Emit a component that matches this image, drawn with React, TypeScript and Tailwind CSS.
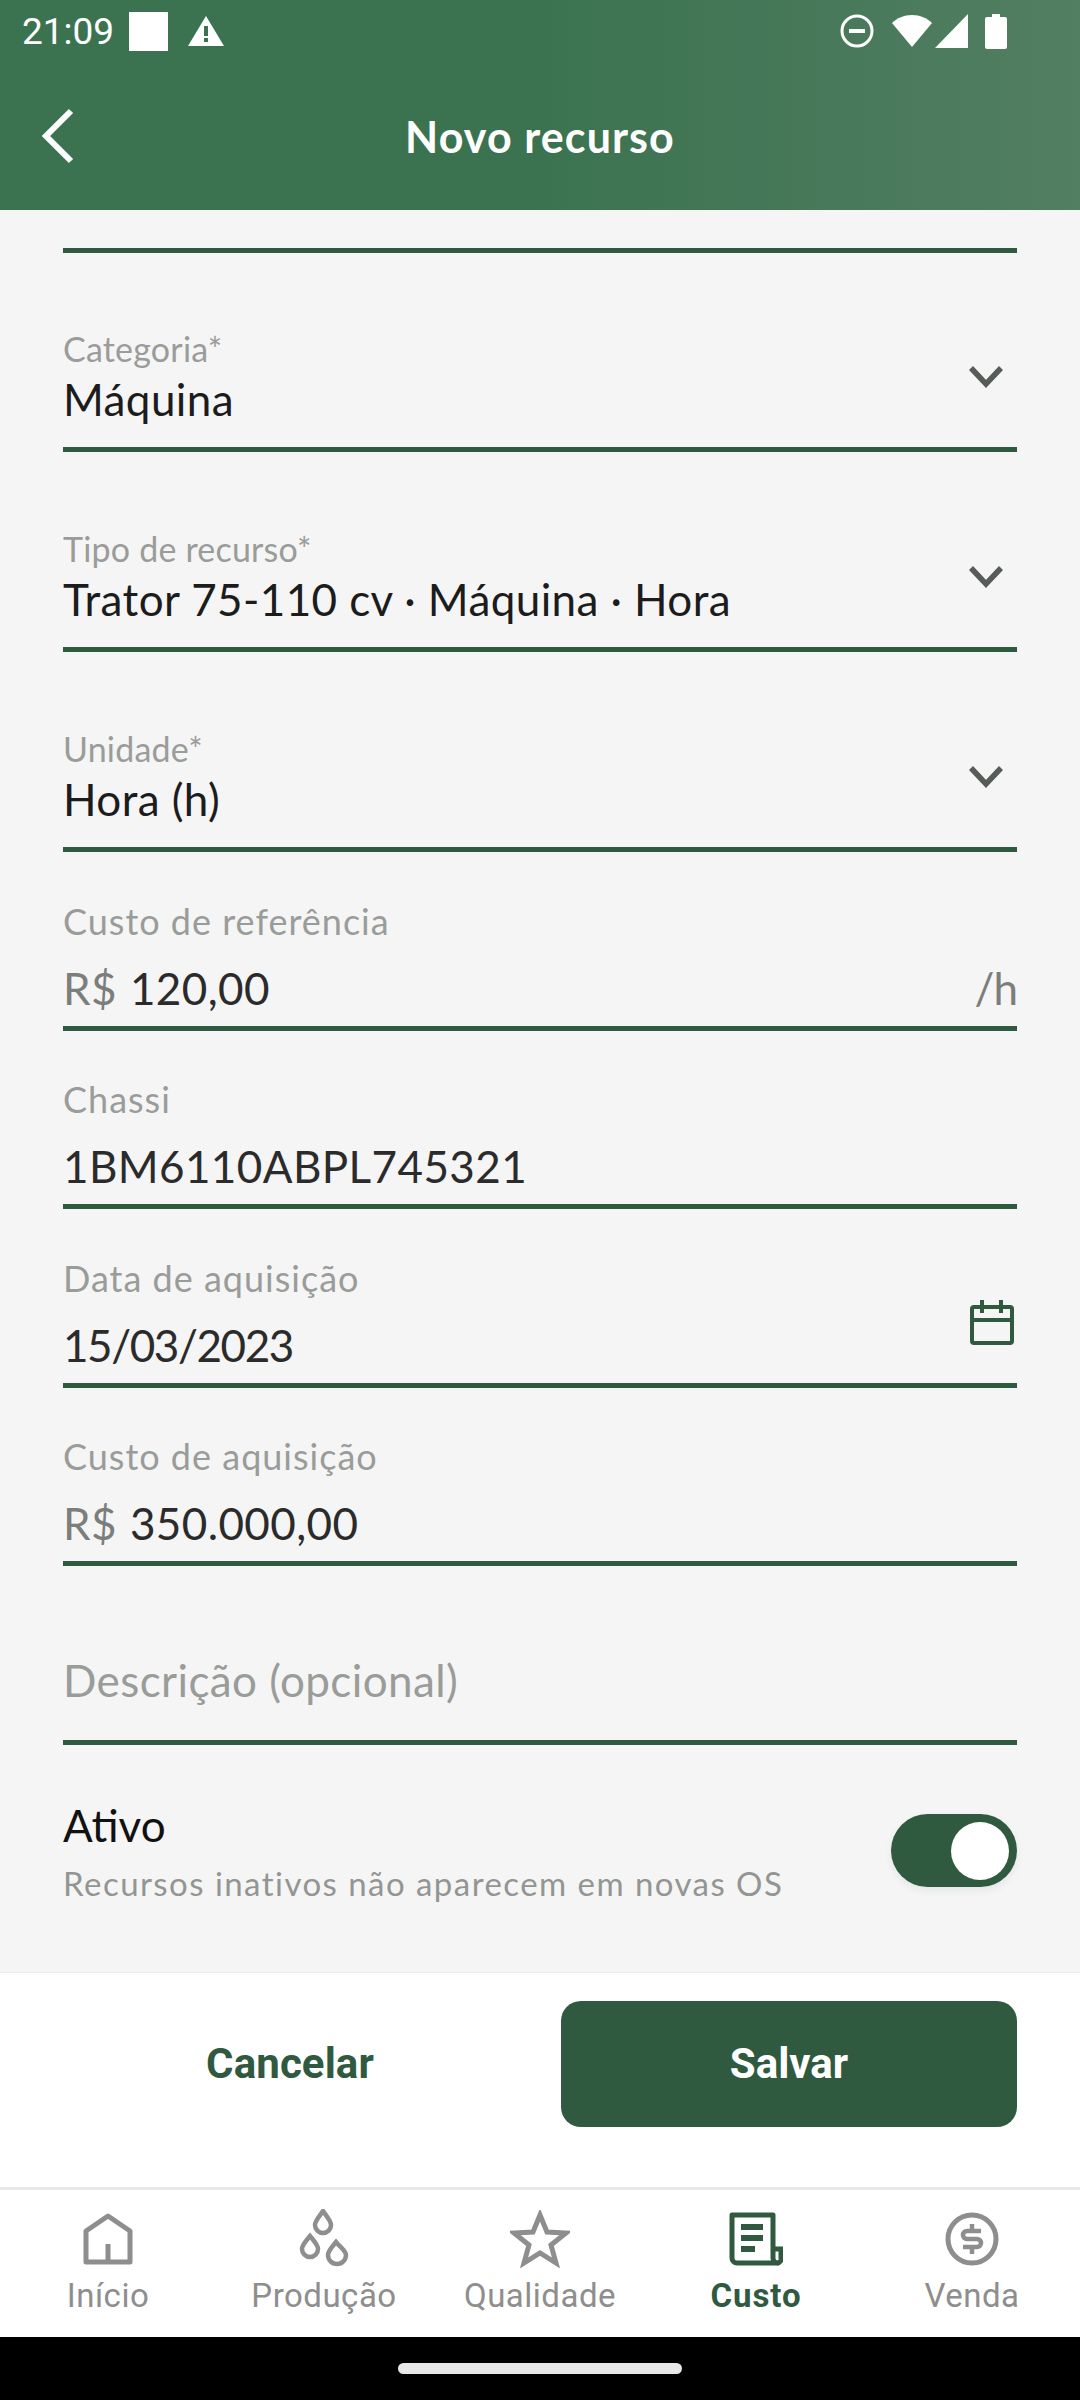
const GREEN = "#305a3f";

function ChevronDown() {
  return (
    <svg width="34" height="22" viewBox="0 0 34 22" className="absolute right-[14px] top-[35px]">
      <path d="M2 2 L17 18 L32 2" fill="none" stroke="#585c58" strokeWidth="5.5" />
    </svg>
  );
}

function CalendarIcon() {
  return (
    <svg width="44" height="45" viewBox="0 0 44 45" fill="none" stroke={GREEN} strokeWidth="4">
      <rect x="2" y="7" width="40" height="36" rx="2" />
      <path d="M2 20 H42 M12 0 V13 M31 0 V13" />
    </svg>
  );
}

function SelectField({ label, value }: { label: string; value: string }) {
  return (
    <div className="h-[200px] flex flex-col justify-end">
      <div className="relative border-b-[5px] border-[#305a3f] pb-[22px]">
        <div className="text-[34px] leading-[36px] tracking-[0.2px] text-[#9a9c9a]">{label}</div>
        <div className="mt-[6px] text-[44px] leading-[52px] tracking-[0.4px] text-[#1c1c1c]">{value}</div>
        <ChevronDown />
      </div>
    </div>
  );
}

function TextField({
  label,
  value,
  prefix,
  suffix,
  icon,
}: {
  label: string;
  value: string;
  prefix?: string;
  suffix?: string;
  icon?: boolean;
}) {
  return (
    <div className="h-[178.5px] flex flex-col justify-end">
      <div className="relative border-b-[5px] border-[#305a3f] pb-[12px]">
        <div className="text-[36px] leading-[40px] tracking-[1px] text-[#9a9c9a]">{label}</div>
        <div className="mt-[21px] flex items-center text-[44px] leading-[52px] tracking-[0.4px] text-[#2b2b2b]">
          {prefix && <span className="text-[#7c7e7c] mr-[13px]">{prefix}</span>}
          <span className={icon ? "flex-1 tracking-[-1.4px]" : "flex-1"}>{value}</span>
          {suffix && <span className="text-[#7c7e7c] tracking-[-1px]">{suffix}</span>}
        </div>
        {icon && (
          <div className="absolute right-[3px] top-[42px]">
            <CalendarIcon />
          </div>
        )}
      </div>
    </div>
  );
}

function NavItem({
  label,
  active,
  children,
}: {
  label: string;
  active?: boolean;
  children: React.ReactNode;
}) {
  return (
    <div className="flex-1 flex flex-col items-center">
      <div className="h-[62px] flex items-center justify-center">{children}</div>
      <div
        className={
          active
            ? "mt-[7px] text-[33px] leading-[38px] tracking-[0.9px] font-bold text-[#305a3f]"
            : "mt-[7px] text-[33px] leading-[38px] tracking-[0.5px] text-[#8e8e8e]"
        }
      >
        {label}
      </div>
    </div>
  );
}

export default function App() {
  return (
    <div className="w-[1080px] h-[2400px] flex flex-col overflow-hidden bg-[#f5f5f5] font-['Lato',sans-serif]">
      {/* header */}
      <div className="h-[210px] shrink-0 bg-gradient-to-r from-[#3b7350] from-50% to-[#527e62] text-white">
        <div className="h-[66px] flex items-center pb-[4px] pl-[22px] pr-[73px] font-['Roboto',sans-serif]">
          <span className="text-[37px] leading-[40px] translate-y-[1px]">21:09</span>
          <div className="ml-[15px] w-[39px] h-[39px] bg-white" />
          <svg width="36" height="32" viewBox="0 0 36 32" className="ml-[20px]">
            <path fillRule="evenodd" fill="#fff" d="M18 1 L36 31 H0 Z M16 11 V21 H20 V11 Z M16 23 V27 H20 V23 Z" />
          </svg>
          <div className="flex-1" />
          <svg width="34" height="34" viewBox="0 0 34 34" fill="none" stroke="#fff">
            <circle cx="17" cy="17" r="15" strokeWidth="3" />
            <path d="M9 17 H25" strokeWidth="4" />
          </svg>
          <svg width="40" height="34" viewBox="0 0 40 34" className="ml-[18px]">
            <path fill="#fff" d="M20 33 L0 9 C5 4 12 1 20 1 C28 1 35 4 40 9 Z" />
          </svg>
          <svg width="34" height="34" viewBox="0 0 34 34" className="ml-[3px]">
            <path fill="#fff" d="M33 0 V34 H0 Z" />
          </svg>
          <svg width="22" height="35" viewBox="0 0 22 35" className="ml-[16px]">
            <path fill="#fff" d="M7 0 H15 V3 H20 Q22 3 22 5 V33 Q22 35 20 35 H2 Q0 35 0 33 V5 Q0 3 2 3 H7 Z" />
          </svg>
        </div>
        <div className="relative h-[144px] flex items-center justify-center">
          <svg width="36" height="56" viewBox="0 0 36 56" className="absolute left-[40px] top-[42px]">
            <path d="M31 3 L6 28 L31 53" fill="none" stroke="#fff" strokeWidth="6" />
          </svg>
          <span className="text-[43px] leading-[50px] tracking-[1.1px] font-bold -translate-y-[1px]">Novo recurso</span>
        </div>
      </div>

      {/* form */}
      <div className="flex-1 px-[63px] overflow-hidden">
        <div className="mt-[38px] -mb-px h-[5px] bg-[#305a3f]" />
        <SelectField label="Categoria*" value="Máquina" />
        <SelectField label="Tipo de recurso*" value="Trator 75-110 cv · Máquina · Hora" />
        <SelectField label="Unidade*" value="Hora (h)" />
        <TextField label="Custo de referência" prefix="R$" value="120,00" suffix="/h" />
        <TextField label="Chassi" value="1BM6110ABPL745321" />
        <TextField label="Data de aquisição" value="15/03/2023" icon />
        <TextField label="Custo de aquisição" prefix="R$" value="350.000,00" />
        <div className="h-[178.5px] flex flex-col justify-end">
          <div className="border-b-[5px] border-[#305a3f] pb-[34px] text-[44px] leading-[52px] tracking-[0.4px] text-[#9a9c9a]">
            Descrição (opcional)
          </div>
        </div>
        <div className="mt-[55px] flex items-center justify-between">
          <div>
            <div className="text-[44px] leading-[50px] text-[#111]">Ativo</div>
            <div className="mt-[14px] text-[33px] leading-[38px] tracking-[1.45px] text-[#939593]">
              Recursos inativos não aparecem em novas OS
            </div>
          </div>
          <div className="w-[126px] h-[73px] rounded-full bg-[#305a3f] flex items-center justify-end pr-[8px] shadow-[0_4px_8px_rgba(0,0,0,0.06)]">
            <div className="w-[58px] h-[58px] rounded-full bg-white" />
          </div>
        </div>
      </div>

      {/* actions */}
      <div className="h-[215px] shrink-0 bg-white border-t border-[#ececec] flex items-start pt-[28px] pl-[63px] pr-[63px] font-['Roboto',sans-serif]">
        <div className="w-[454px] h-[124px] flex items-center justify-center text-[42px] tracking-[0.1px] font-bold text-[#305a3f]">
          Cancelar
        </div>
        <div className="ml-[44px] w-[456px] h-[126px] pb-[2px] rounded-[20px] bg-[#305a3f] flex items-center justify-center text-[42px] font-bold text-white">
          Salvar
        </div>
      </div>

      {/* nav */}
      <div className="h-[150px] shrink-0 bg-white border-t-[3px] border-[#e8e8e8] flex pt-[18px] font-['Roboto',sans-serif]">
        <NavItem label="Início">
          <svg width="50" height="52" viewBox="0 0 50 52" fill="none" stroke="#8e8e8e" strokeWidth="5">
            <path d="M3 49 V18 L25 3 L47 18 V49 Z M25 49 V31" strokeLinejoin="round" />
          </svg>
        </NavItem>
        <NavItem label="Produção">
          <svg width="50" height="60" viewBox="0 0 50 60" fill="none" stroke="#8e8e8e" strokeWidth="4.5">
            <path d="M24 2 C20 8 16 12 16 16 A8 8 0 0 0 32 16 C32 12 28 8 24 2 Z" />
            <path d="M11 27 C7 32 3 36 3 40 A8 8 0 0 0 19 40 C19 36 15 32 11 27 Z" />
            <path d="M37 33 C33 38 29 42 29 46 A9 9 0 0 0 47 46 C47 42 41 38 37 33 Z" />
          </svg>
        </NavItem>
        <NavItem label="Qualidade">
          <svg width="60" height="58" viewBox="0 0 60 58" fill="none" stroke="#8e8e8e" strokeWidth="5">
            <path d="M30 5 L37 22 L56 23 L41 35 L46 53 L30 43 L14 53 L19 35 L4 23 L23 22 Z" />
          </svg>
        </NavItem>
        <NavItem label="Custo" active>
          <svg width="54" height="54" viewBox="0 0 54 54" fill="none" stroke="#305a3f">
            <path d="M3 3 H44 V46 A5 5 0 0 0 49 51 H8 A5 5 0 0 1 3 46 Z" strokeWidth="5" strokeLinejoin="round" />
            <path d="M44 37 H52 V46 A4 4 0 0 1 48 51" strokeWidth="5" />
            <path d="M12 15 H34 M12 26 H34 M12 37 H26" strokeWidth="6" />
          </svg>
        </NavItem>
        <NavItem label="Venda">
          <svg width="54" height="54" viewBox="0 0 54 54" fill="none" stroke="#8e8e8e">
            <circle cx="27" cy="27" r="24" strokeWidth="5" />
            <path d="M36 19 H22 A4 4 0 0 0 22 27 H32 A4 4 0 0 1 32 35 H18 M27 12 V19 M27 35 V42" strokeWidth="4.5" />
          </svg>
        </NavItem>
      </div>

      {/* gesture bar */}
      <div className="h-[63px] shrink-0 bg-black flex justify-center pt-[26px]">
        <div className="w-[284px] h-[11px] rounded-full bg-[#e8e8e8]" />
      </div>
    </div>
  );
}
